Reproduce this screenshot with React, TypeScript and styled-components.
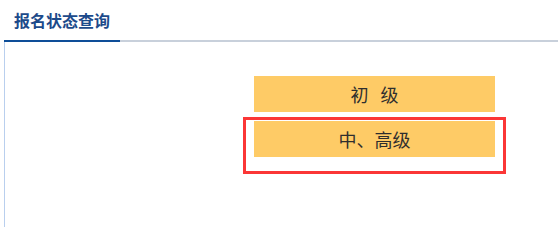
import styled, { createGlobalStyle } from 'styled-components'

const GlobalStyle = createGlobalStyle`
  html, body {
    margin: 0;
    padding: 0;
    background: #fff;
  }
  body {
    font-family: "Noto Sans CJK SC", "Noto Sans", sans-serif;
  }
`

const Page = styled.div`
  width: 558px;
  height: 227px;
  display: flex;
  flex-direction: column;
  padding-left: 4px;
  box-sizing: border-box;
  overflow: hidden;
`

const TabBar = styled.div`
  display: flex;
  border-bottom: 2px solid #c8d0db;
  height: 40px;
`

const Tab = styled.div`
  padding: 0 10px;
  height: 40px;
  line-height: 40px;
  font-size: 16px;
  font-weight: 700;
  color: #1c4a8a;
  border-bottom: 2px solid #0e4e98;
`

const Panel = styled.div`
  flex: 1;
  border-left: 1px solid #b9cfee;
  padding: 34px 0 0 238px;
  display: flex;
  flex-direction: column;
  align-items: flex-start;
`

const LevelButton = styled.button<{ $spaced?: boolean }>`
  width: 241px;
  height: 36px;
  margin: 0;
  padding: 0;
  border: none;
  background: #fecb66;
  color: #2e2e2e;
  font-family: "Noto Sans CJK SC", "Noto Sans", sans-serif;
  font-size: 18px;
  line-height: 36px;
  word-spacing: ${p => (p.$spaced ? '8px' : '0')};
  cursor: pointer;
`

const FirstButton = styled(LevelButton)`
  margin-left: 11px;
`

const Highlight = styled.div`
  margin-top: 5px;
  border: 3px solid #fb3636;
  padding: 1px 8px 14px 8px;
`

const App = () => {
  return (
    <>
      <GlobalStyle />
      <Page>
        <TabBar>
          <Tab>报名状态查询</Tab>
        </TabBar>
        <Panel>
          <FirstButton $spaced>初 级</FirstButton>
          <Highlight>
            <LevelButton>中、高级</LevelButton>
          </Highlight>
        </Panel>
      </Page>
    </>
  )
}

export default App
